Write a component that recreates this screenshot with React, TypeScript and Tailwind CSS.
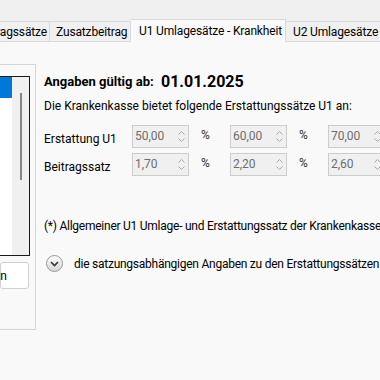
import React from "react";

function Spin({ value }: { value: string }) {
  return (
    <div className="w-[57px] h-[23px] border border-[#cccccc] bg-[#f0f0f0] flex shrink-0">
      <div className="flex-1 pl-[2px] pt-[2px] text-[#6d6d6d] leading-[16px]">{value}</div>
      <div className="w-[13px] flex flex-col items-center justify-center gap-[3px] pr-[1px]">
        <svg width="7" height="4" viewBox="0 0 7 4"><path d="M0.5 3.5 L3.5 0.5 L6.5 3.5" fill="none" stroke="#a8a8a8" strokeWidth="1" /></svg>
        <svg width="7" height="4" viewBox="0 0 7 4"><path d="M0.5 0.5 L3.5 3.5 L6.5 0.5" fill="none" stroke="#a8a8a8" strokeWidth="1" /></svg>
      </div>
    </div>
  );
}

function Pct() {
  return <div className="w-[41px] pl-[12px] text-[#333] leading-[16px] pt-[2px] shrink-0">%</div>;
}

export default function App() {
  return (
    <div
      className="w-[380px] h-[380px] overflow-hidden bg-[#f0f0f0] text-[12px] text-black"
      style={{ fontFamily: 'Roboto, "Segoe UI", sans-serif' }}
    >
      <div className="h-[19px]" />
      <div className="flex items-end h-[22px] relative z-10 whitespace-nowrap tracking-[-0.15px]">
        <div className="w-[50px] h-[20px] border-t border-r border-[#d9d9d9] bg-[#f0f0f0] flex items-center justify-end overflow-hidden pr-[2px] shrink-0">
          <span>Beitragssätze</span>
        </div>
        <div className="w-[81px] h-[20px] border-t border-r border-[#d9d9d9] bg-[#f0f0f0] flex items-center pl-[6px] shrink-0">
          Zusatzbeitrag
        </div>
        <div className="w-[155px] h-[23px] -mb-px border-t border-r border-[#d9d9d9] bg-[#f9f9f9] flex items-center pl-[8px] pb-[1px] shrink-0">
          U1 Umlagesätze - Krankheit
        </div>
        <div className="w-[120px] h-[20px] border-t border-[#d9d9d9] bg-[#f0f0f0] flex items-center pl-[7px] shrink-0">
          U2 Umlagesätze - Mutterschaft
        </div>
      </div>
      <div className="h-[339px] bg-[#f9f9f9] border-t border-[#d9d9d9] flex">
        <div className="w-[36px] mt-[22px] h-[266px] border-t border-r border-b border-[#d5d5d5] flex flex-col shrink-0">
          <div className="mt-[11px] h-[180px] w-[30px] border-t border-r border-b border-[#1a1a1a] flex">
            <div className="w-[12px] bg-white">
              <div className="h-[21px] bg-[#0078d7]" />
            </div>
            <div className="w-[17px] bg-[#f0f0f0] flex justify-center pt-[16px]">
              <div className="w-[2px] h-[87px] bg-[#858585]" />
            </div>
          </div>
          <div className="mt-[6px] h-[27px] w-[29px] border border-[#d0d0d0] rounded-[3px] bg-white flex items-center justify-end pr-[21px]">
            n
          </div>
        </div>
        <div className="pl-[8px] flex flex-col whitespace-nowrap">
          <div className="mt-[30px] h-[20px] flex items-center">
            <div className="w-[117px] font-bold text-[13px]">Angaben gültig ab:</div>
            <div className="font-bold text-[16px]">01.01.2025</div>
          </div>
          <div className="mt-[6px] leading-[16px]">Die Krankenkasse bietet folgende Erstattungssätze U1 an:</div>
          <div className="mt-[11px] flex flex-col gap-[5px]">
            <div className="flex">
              <div className="w-[88px] pt-[6px] leading-[16px] shrink-0">Erstattung U1</div>
              <Spin value="50,00" />
              <Pct />
              <Spin value="60,00" />
              <Pct />
              <Spin value="70,00" />
            </div>
            <div className="flex">
              <div className="w-[88px] pt-[6px] leading-[16px] shrink-0">Beitragssatz</div>
              <Spin value="1,70" />
              <Pct />
              <Spin value="2,20" />
              <Pct />
              <Spin value="2,60" />
            </div>
          </div>
          <div className="mt-[42px] leading-[16px] tracking-[-0.25px]">(*) Allgemeiner U1 Umlage- und Erstattungssatz der Krankenkasse</div>
          <div className="mt-[21px] flex items-center">
            <div className="w-[17px] h-[17px] ml-[2px] rounded-full border border-[#9a9a9a] bg-gradient-to-b from-[#fdfdfd] to-[#d6d6d6] flex items-center justify-center shrink-0">
              <svg width="9" height="6" viewBox="0 0 9 6"><path d="M1 1 L4.5 4.5 L8 1" fill="none" stroke="#333" strokeWidth="1.6" /></svg>
            </div>
            <div className="ml-[11px] leading-[16px] tracking-[-0.25px]">die satzungsabhängigen Angaben zu den Erstattungssätzen einblenden</div>
          </div>
        </div>
      </div>
    </div>
  );
}
